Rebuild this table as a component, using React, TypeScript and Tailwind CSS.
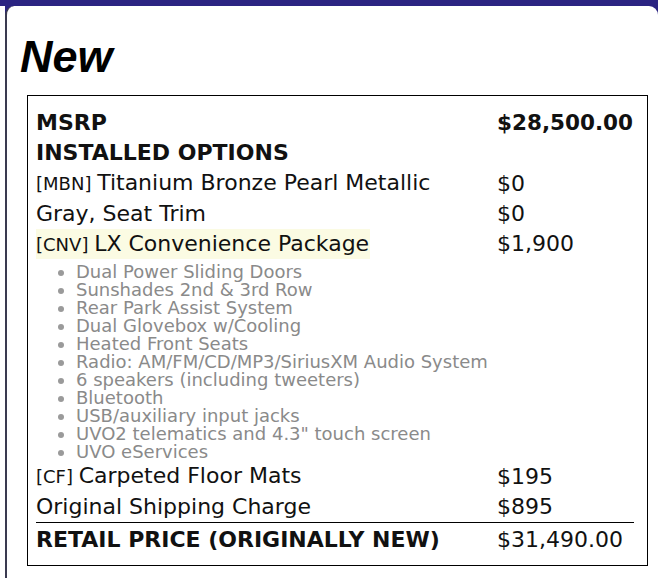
import React from 'react';

interface Line {
  code?: string;
  label: string;
  price: string;
  highlight?: boolean;
}

const features = [
  'Dual Power Sliding Doors',
  'Sunshades 2nd & 3rd Row',
  'Rear Park Assist System',
  'Dual Glovebox w/Cooling',
  'Heated Front Seats',
  'Radio: AM/FM/CD/MP3/SiriusXM Audio System',
  '6 speakers (including tweeters)',
  'Bluetooth',
  'USB/auxiliary input jacks',
  'UVO2 telematics and 4.3" touch screen',
  'UVO eServices',
];

const beforeList: Line[] = [
  { code: 'MBN', label: 'Titanium Bronze Pearl Metallic', price: '$0' },
  { label: 'Gray, Seat Trim', price: '$0' },
  { code: 'CNV', label: 'LX Convenience Package', price: '$1,900', highlight: true },
];

const afterList: Line[] = [
  { code: 'CF', label: 'Carpeted Floor Mats', price: '$195' },
  { label: 'Original Shipping Charge', price: '$895' },
];

const OptionRow: React.FC<{ line: Line }> = ({ line }) => (
  <tr className="h-[30px]">
    <td className="p-0 align-middle">
      <span className={line.highlight ? 'bg-[#fbfbe3] inline-block h-[30px] leading-[30px] pr-[1px]' : ''}>
        {line.code && <span className="text-[18px]">[{line.code}] </span>}
        {line.label}
      </span>
    </td>
    <td className="p-0 align-middle whitespace-nowrap">{line.price}</td>
  </tr>
);

const App: React.FC = () => {
  return (
    <div className="w-[658px] h-[578px] overflow-hidden bg-white">
      <div className="h-[6px] bg-[#2b2482]" />
      <div className="ml-[5px] bg-[#2b2482] h-[572px]">
        <div className="h-full bg-white rounded-t-[9px] border-l-2 border-[#3a3a50] pl-[13px]">
          <h1
            className="pt-[27px] text-[45px] leading-[48px] font-bold italic text-black"
            style={{ fontFamily: '"Liberation Sans", Arial, sans-serif' }}
          >
            New
          </h1>

          <div
            className="mt-[14px] ml-[7px] w-[621px] border border-black pl-[8px] pr-[13px] pt-[12px] pb-[6px] text-[22px] leading-[30px] text-[#111]"
            style={{ fontFamily: '"DejaVu Sans", Verdana, sans-serif' }}
          >
            <table className="w-full table-fixed border-collapse">
              <colgroup>
                <col className="w-[461px]" />
                <col />
              </colgroup>
              <tbody>
                <tr className="h-[30px] font-bold">
                  <td className="p-0">MSRP</td>
                  <td className="p-0 text-[21.5px] whitespace-nowrap">$28,500.00</td>
                </tr>
                <tr className="h-[30px] font-bold">
                  <td className="p-0" colSpan={2}>INSTALLED OPTIONS</td>
                </tr>
                {beforeList.map((l) => (
                  <OptionRow key={l.label} line={l} />
                ))}
                <tr>
                  <td className="p-0" colSpan={2}>
                    <ul className="list-disc pl-[40px] pt-[4px] text-[18px] leading-[18px] text-[#8a8a8a] marker:text-[#9a9a9a]">
                      {features.map((f) => (
                        <li key={f}>{f}</li>
                      ))}
                    </ul>
                  </td>
                </tr>
                {afterList.map((l) => (
                  <OptionRow key={l.label} line={l} />
                ))}
                <tr className="h-[36px]">
                  <td className="p-0 pt-[1px] pb-[3px] border-t border-black font-bold">RETAIL PRICE (ORIGINALLY NEW)</td>
                  <td className="p-0 pt-[1px] pb-[3px] border-t border-black whitespace-nowrap">$31,490.00</td>
                </tr>
              </tbody>
            </table>
          </div>
        </div>
      </div>
    </div>
  );
};

export default App;
